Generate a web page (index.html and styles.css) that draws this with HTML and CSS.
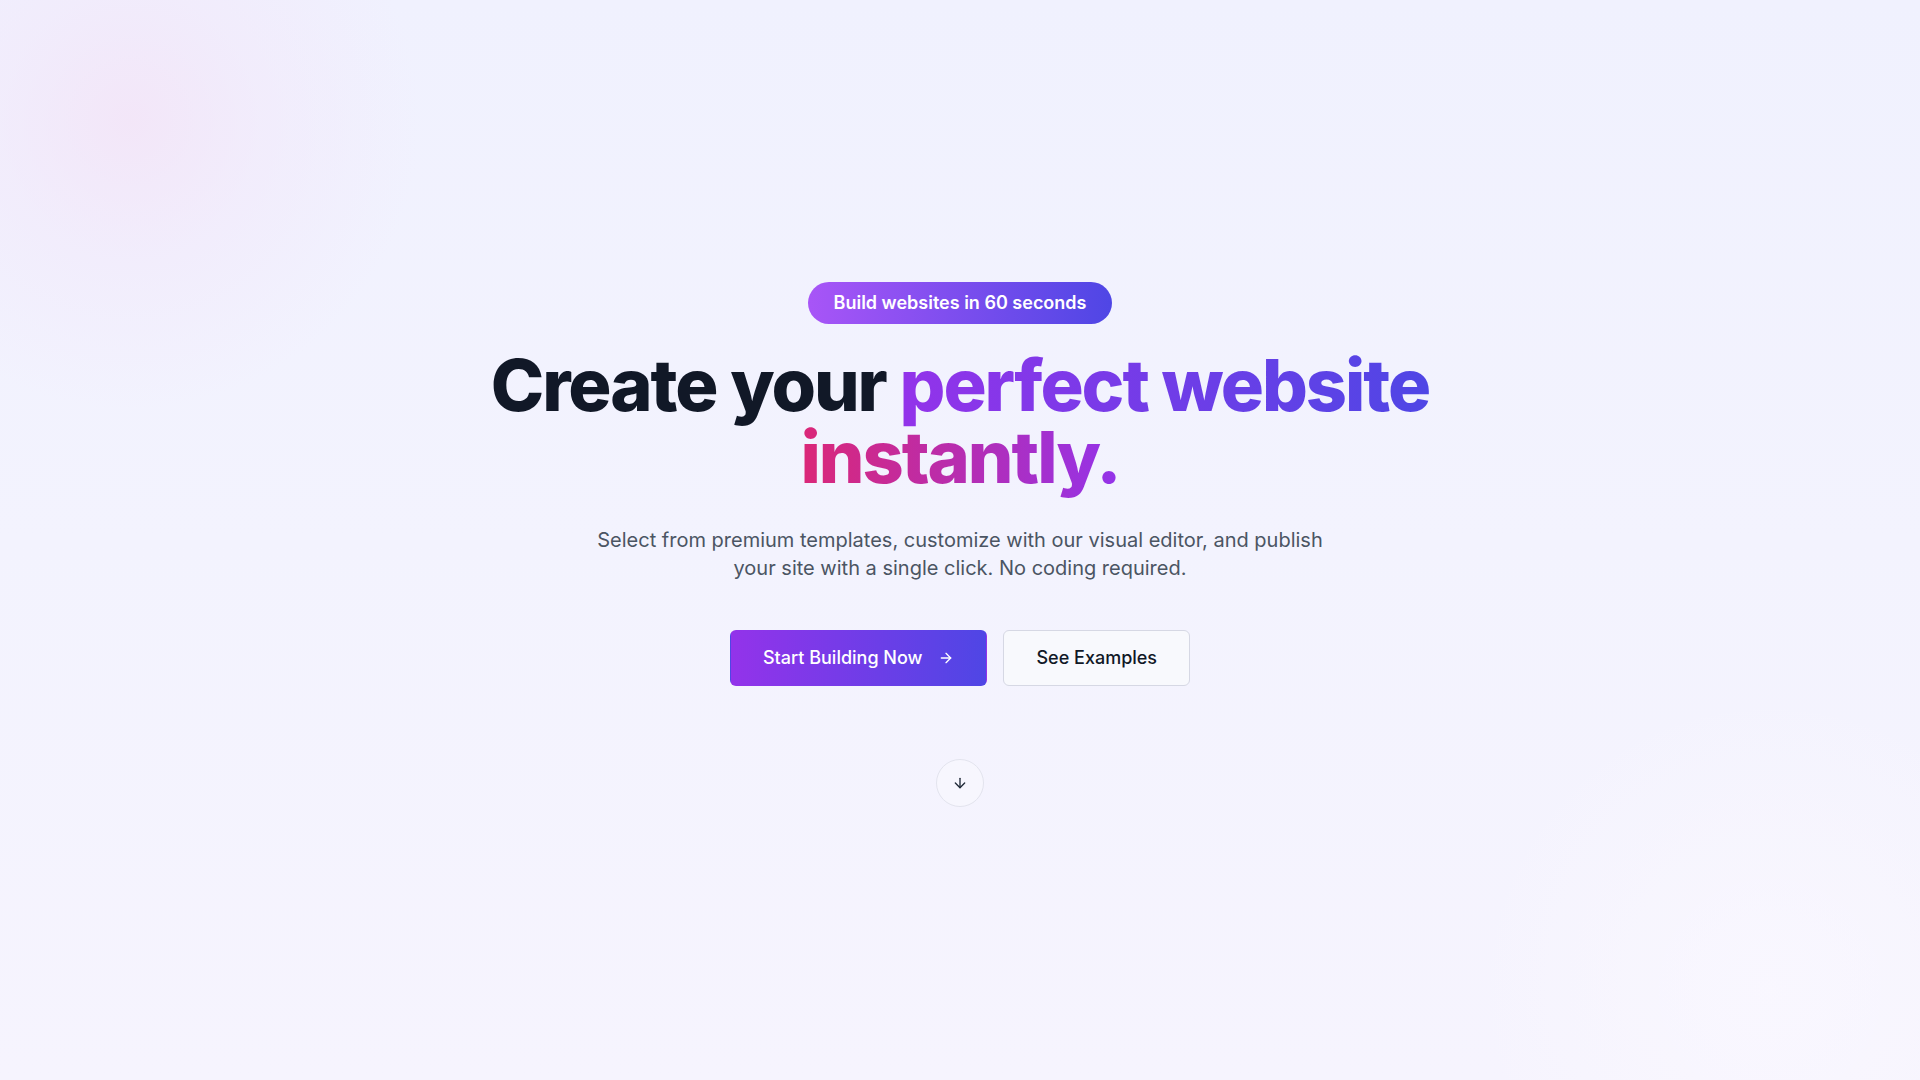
FILE: index.html
```html
<!DOCTYPE html>
<html lang="en">
<head>
<meta charset="utf-8">
<title>Create your perfect website instantly</title>
<link rel="stylesheet" href="styles.css">
</head>
<body>
<main class="hero">
  <div class="blob blob-pink"></div>
  <div class="blob blob-light"></div>
  <section class="hero-content">
    <span class="badge">Build websites in 60 seconds</span>
    <h1 class="title">
      <span class="line">Create your <span class="grad-purple">perfect website</span></span>
      <span class="line"><span class="grad-pink">instantly.</span></span>
    </h1>
    <p class="subtitle">Select from premium templates, customize with our visual editor, and publish your site with a single click. No coding required.</p>
    <div class="actions">
      <a class="btn btn-primary" href="#">
        <span>Start Building Now</span>
        <svg class="icon" viewBox="0 0 24 24" width="16" height="16" fill="none" stroke="currentColor" stroke-width="2" stroke-linecap="round" stroke-linejoin="round"><path d="M5 12h14"/><path d="M12 5l7 7-7 7"/></svg>
      </a>
      <a class="btn btn-secondary" href="#">See Examples</a>
    </div>
    <a class="scroll" href="#">
      <svg viewBox="0 0 24 24" width="16" height="16" fill="none" stroke="currentColor" stroke-width="2" stroke-linecap="round" stroke-linejoin="round"><path d="M12 5v14"/><path d="M19 12l-7 7-7-7"/></svg>
    </a>
  </section>
</main>
</body>
</html>
```

FILE: styles.css
```css
* { box-sizing: border-box; }

html, body {
  margin: 0;
  padding: 0;
  height: 100%;
}

body {
  font-family: Inter, "Noto Sans", "Liberation Sans", sans-serif;
  color: #111827;
  background: linear-gradient(180deg, #f0f1fe 0%, #f3f3fe 50%, #f6f4fe 100%);
  overflow: hidden;
}

.hero {
  position: relative;
  min-height: 100vh;
  overflow: hidden;
}

.blob {
  position: absolute;
  border-radius: 50%;
  pointer-events: none;
}

.blob-pink {
  left: -200px;
  top: -210px;
  width: 660px;
  height: 660px;
  background: radial-gradient(circle at center, rgba(243, 228, 247, 0.85) 0%, rgba(242, 232, 250, 0.55) 28%, rgba(240, 236, 252, 0) 62%);
}

.blob-light {
  right: -200px;
  bottom: -260px;
  width: 700px;
  height: 700px;
  background: radial-gradient(circle at center, rgba(250, 248, 255, 0.8) 0%, rgba(248, 246, 255, 0) 60%);
}

.hero-content {
  position: relative;
  display: flex;
  flex-direction: column;
  align-items: center;
  text-align: center;
  padding-top: 282px;
}

.badge {
  display: inline-block;
  padding: 7px 26px;
  border-radius: 999px;
  background: linear-gradient(90deg, #a855f7 0%, #4f46e5 100%);
  color: #ffffff;
  font-size: 18px;
  line-height: 28px;
  font-weight: 600;
  margin-bottom: 25px;
}

.title {
  margin: 0 0 33px;
  font-size: 72px;
  line-height: 72px;
  font-weight: 800;
  letter-spacing: -0.0285em;
  color: #111827;
}

.line { display: block; }

.grad-purple {
  background: linear-gradient(90deg, #9333ea 0%, #4f46e5 100%);
  -webkit-background-clip: text;
  background-clip: text;
  color: transparent;
}

.grad-pink {
  background: linear-gradient(90deg, #db2777 0%, #9333ea 100%);
  -webkit-background-clip: text;
  background-clip: text;
  color: transparent;
}

.subtitle {
  margin: 0 0 48px;
  max-width: 768px;
  font-size: 20px;
  line-height: 28px;
  font-weight: 400;
  color: #4b5563;
}

.actions {
  display: flex;
  gap: 16px;
  margin-bottom: 73px;
}

.btn {
  display: inline-flex;
  align-items: center;
  gap: 16px;
  padding: 13px 32px;
  border: 1px solid transparent;
  border-radius: 6px;
  font-size: 18px;
  line-height: 28px;
  font-weight: 500;
  text-decoration: none;
}

.btn-primary {
  background: linear-gradient(90deg, #9333ea 0%, #4f46e5 100%);
  color: #ffffff;
}

.btn-secondary {
  background: #f8f9fd;
  border-color: #d6d8e4;
  color: #111827;
}

.icon { display: block; }

.scroll {
  display: flex;
  align-items: center;
  justify-content: center;
  width: 48px;
  height: 48px;
  border-radius: 50%;
  border: 1px solid #e3e4ee;
  background: rgba(248, 248, 254, 0.6);
  color: #1f2937;
}
```
